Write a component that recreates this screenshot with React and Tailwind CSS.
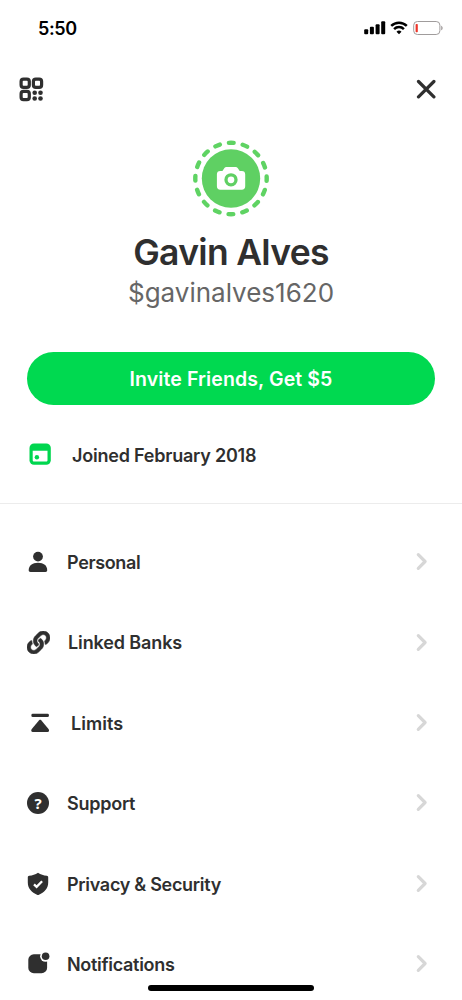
import React from 'react';
import { FaLink } from 'react-icons/fa';

const menuItems = [
  { label: 'Personal', icon: PersonIcon, gap: 'pl-[17px] tracking-[-0.35px]' },
  { label: 'Linked Banks', icon: LinkIcon, gap: 'pl-[18px] tracking-[-0.12px]' },
  { label: 'Limits', icon: LimitsIcon, gap: 'pl-[21px] tracking-[0.05px]' },
  { label: 'Support', icon: SupportIcon, gap: 'pl-[17px] tracking-[-0.25px]' },
  { label: 'Privacy & Security', icon: ShieldIcon, gap: 'pl-[17px] tracking-[-0.3px]' },
  { label: 'Notifications', icon: NotificationIcon, gap: 'pl-[17px] tracking-[-0.3px]' },
];

function PersonIcon() {
  return (
    <svg className="w-6 h-6" viewBox="0 0 24 24" fill="currentColor">
      <circle cx="12" cy="6.6" r="4.9" />
      <path d="M2.7 20.2C2.7 15.6 6.2 12.7 12 12.7s9.2 2.900 9.2 7.5c0 1.100-.6 1.700-1.700 1.700h-15c-1.200 0-1.800-.6-1.800-1.700Z" />
    </svg>
  );
}

function LinkIcon() {
  return (
    <div className="w-6 h-6 flex items-center justify-end">
      <FaLink className="w-[23px] h-[23px]" stroke="currentColor" strokeWidth="12" />
    </div>
  );
}

function LimitsIcon() {
  return (
    <svg className="w-6 h-6" viewBox="0 0 24 24" fill="currentColor">
      <rect x="5.400" y="2.700" width="17.500" height="3.300" rx="1.300" />
      <path d="M13.100 9.200c.6-.6 1.500-.6 2.100 0l7.300 8.700c1.100 1.400.5 3-.9 3H6.700c-1.400 0-2-1.600-.9-3Z" />
    </svg>
  );
}

function SupportIcon() {
  return (
    <div className="w-6 h-6 flex items-center justify-center">
      <div className="w-[22px] h-[22px] rounded-full bg-[#2f2f2f] text-white text-[15px] leading-none font-bold font-['Noto_Sans',sans-serif] flex items-center justify-center">
        ?
      </div>
    </div>
  );
}

function ShieldIcon() {
  return (
    <svg className="w-6 h-6" viewBox="0 0 24 24">
      <path
        d="M12 .7c2.700 1.800 5.600 2.700 8.800 3 .9.1 1.400.6 1.400 1.500v5.200c0 6-4.100 10-9.200 12.300-.7.300-1.300.3-2 0C5.900 20.400 1.800 16.400 1.800 10.400V5.200c0-.9.5-1.400 1.400-1.500 3.200-.3 6.100-1.200 8.800-3Z"
        fill="currentColor"
      />
      <path d="m8 12.300 2.600 2.500 5.500-5.500" fill="none" stroke="white" strokeWidth="2.300" />
    </svg>
  );
}

function NotificationIcon() {
  return (
    <svg className="w-6 h-6" viewBox="0 0 24 24">
      <rect x="2.300" y="2.300" width="18.800" height="18.900" rx="5.500" fill="currentColor" />
      <circle cx="19.600" cy="4.300" r="5.500" fill="white" />
      <circle cx="19.600" cy="4.300" r="3.800" fill="currentColor" />
    </svg>
  );
}

function Chevron() {
  return (
    <svg className="w-3 h-5" viewBox="0 0 12 20" fill="none" stroke="#d7d7d7" strokeWidth="3.200" strokeLinecap="round" strokeLinejoin="round">
      <path d="m2.300 2.700 6.800 6.800-6.800 6.800" />
    </svg>
  );
}

function StatusBar() {
  return (
    <div className="h-14 pl-[38px] pr-[19px] flex items-center justify-between text-black">
      <span className="pt-px text-[18px] leading-6 font-semibold tracking-[-0.4px]">5:50</span>
      <div className="flex items-center">
        <svg className="w-[22px] h-[14px]" viewBox="0 0 22 14" fill="currentColor">
          <rect x="0.200" y="8.200" width="4" height="5" rx="1" />
          <rect x="5.900" y="5.800" width="4" height="7.400" rx="1" />
          <rect x="11.600" y="3.200" width="4" height="10" rx="1" />
          <rect x="17.200" y="0.200" width="4" height="13" rx="1" />
        </svg>
        <svg className="w-[18px] h-[14px] ml-[4px]" viewBox="0 0 18 14" fill="none" stroke="currentColor" strokeWidth="2.500">
          <path d="M1.200 4.900a11.200 11.200 0 0 1 15.600 0" />
          <path d="M4.100 8.100a7 7 0 0 1 9.800 0" />
          <path d="M6.500 10.700a3.600 3.600 0 0 1 5 0L9 13.300Z" fill="currentColor" stroke="none" />
        </svg>
        <svg className="w-[30px] h-[14px] ml-[5px]" viewBox="0 0 30 14">
          <rect x="0.700" y="0.500" width="26.200" height="13" rx="3.700" fill="none" stroke="#a09c9c" />
          <rect x="2.600" y="2.900" width="2.200" height="8.300" rx="0.800" fill="#ed3529" />
          <path d="M28.200 4.700c1.900.7 1.900 3.900 0 4.600Z" fill="#a09c9c" />
        </svg>
      </div>
    </div>
  );
}

function Header() {
  return (
    <div className="h-[66px] pl-[19px] pr-[26px] flex items-center justify-between">
      <svg className="w-[25px] h-[25px]" viewBox="0 0 25 25" fill="none" stroke="currentColor" strokeWidth="3.200">
        <rect x="2.100" y="2.100" width="8.200" height="8.200" rx="2.400" />
        <rect x="14.400" y="2.100" width="8.200" height="8.200" rx="2.400" />
        <rect x="2.100" y="14.400" width="8.200" height="8.200" rx="2.400" />
        <g fill="currentColor" stroke="none">
          <circle cx="15.700" cy="15.700" r="2.300" />
          <circle cx="21.500" cy="15.700" r="2.300" />
          <circle cx="15.700" cy="21.500" r="2.300" />
          <circle cx="21.500" cy="21.500" r="2.300" />
        </g>
      </svg>
      <svg className="w-5 h-5" viewBox="0 0 20 20" fill="none" stroke="currentColor" strokeWidth="3.200" strokeLinecap="round">
        <path d="m2.500 2.500 15.400 15.400M17.900 2.500 2.500 17.900" />
      </svg>
    </div>
  );
}

function Avatar() {
  return (
    <svg className="w-20 h-20" viewBox="0 0 80 80">
      <circle
        cx="40"
        cy="40.500"
        r="35.700"
        fill="none"
        stroke="#5fd363"
        strokeWidth="4.400"
        strokeLinecap="round"
        strokeDasharray="4.800 9.220"
        strokeDashoffset="2.400"
      />
      <circle cx="40" cy="40.500" r="29.200" fill="#5fd063" />
      <path
        d="M35.500 29h9c1.100 0 1.800.5 2.500 1.500l1.700 2.500h2.100c2.200 0 3.400 1.200 3.400 3.300v12c0 2.100-1.200 3.400-3.400 3.400H29.300c-2.200 0-3.400-1.300-3.400-3.400v-12c0-2.100 1.200-3.300 3.400-3.300h2.100l1.700-2.500c.7-1 1.300-1.500 2.400-1.500Z"
        fill="white"
      />
      <circle cx="40" cy="41.800" r="5" fill="white" stroke="#5fd063" strokeWidth="3.300" />
    </svg>
  );
}

function App() {
  return (
    <div className="relative w-[462px] h-[1000px] overflow-hidden bg-white text-[#2f2f2f] font-['Inter','Liberation_Sans',sans-serif]">
      <StatusBar />
      <Header />

      <div className="flex flex-col items-center pt-4">
        <Avatar />
        <h1 className="mt-[13px] text-[35.500px] leading-[44px] font-semibold tracking-[-0.7px]">Gavin Alves</h1>
        <p className="text-[26px] leading-[36px] text-[#666666]">$gavinalves1620</p>
      </div>

      <div className="px-[27px] pt-[41px]">
        <button className="w-full h-[53px] pt-0.5 rounded-full bg-[#00d950] text-white text-[19.500px] font-semibold tracking-[0.1px]">
          Invite Friends, Get $5
        </button>
      </div>

      <div className="h-[99px] pl-[29px] flex items-center border-b border-[#ececec]">
        <svg className="w-[22px] h-[22px]" viewBox="0 0 22 22">
          <rect x="0.500" y="0.500" width="21.300" height="21.300" rx="4.500" fill="#00d64f" />
          <path d="M3.700 7.700h14.800v9.200c0 1-.5 1.500-1.500 1.500H5.200c-1 0-1.500-.5-1.500-1.500Z" fill="white" />
          <circle cx="7.900" cy="14.200" r="2.200" fill="#00d64f" />
        </svg>
        <span className="ml-[21px] pt-[3px] text-[18px] font-semibold tracking-[-0.22px]">Joined February 2018</span>
      </div>

      <div className="pt-[18px]">
        {menuItems.map(({ label, icon: Icon, gap }) => (
          <div key={label} className="h-[80.400px] pl-[26px] pr-[34px] flex items-center">
            <Icon />
            <span className={`flex-1 pt-[1.500px] text-[18px] leading-6 font-semibold ${gap}`}>{label}</span>
            <Chevron />
          </div>
        ))}
      </div>

      <div className="absolute bottom-[9px] left-[148px] w-[166px] h-[6px] rounded-full bg-black" />
    </div>
  );
}

export default App;
